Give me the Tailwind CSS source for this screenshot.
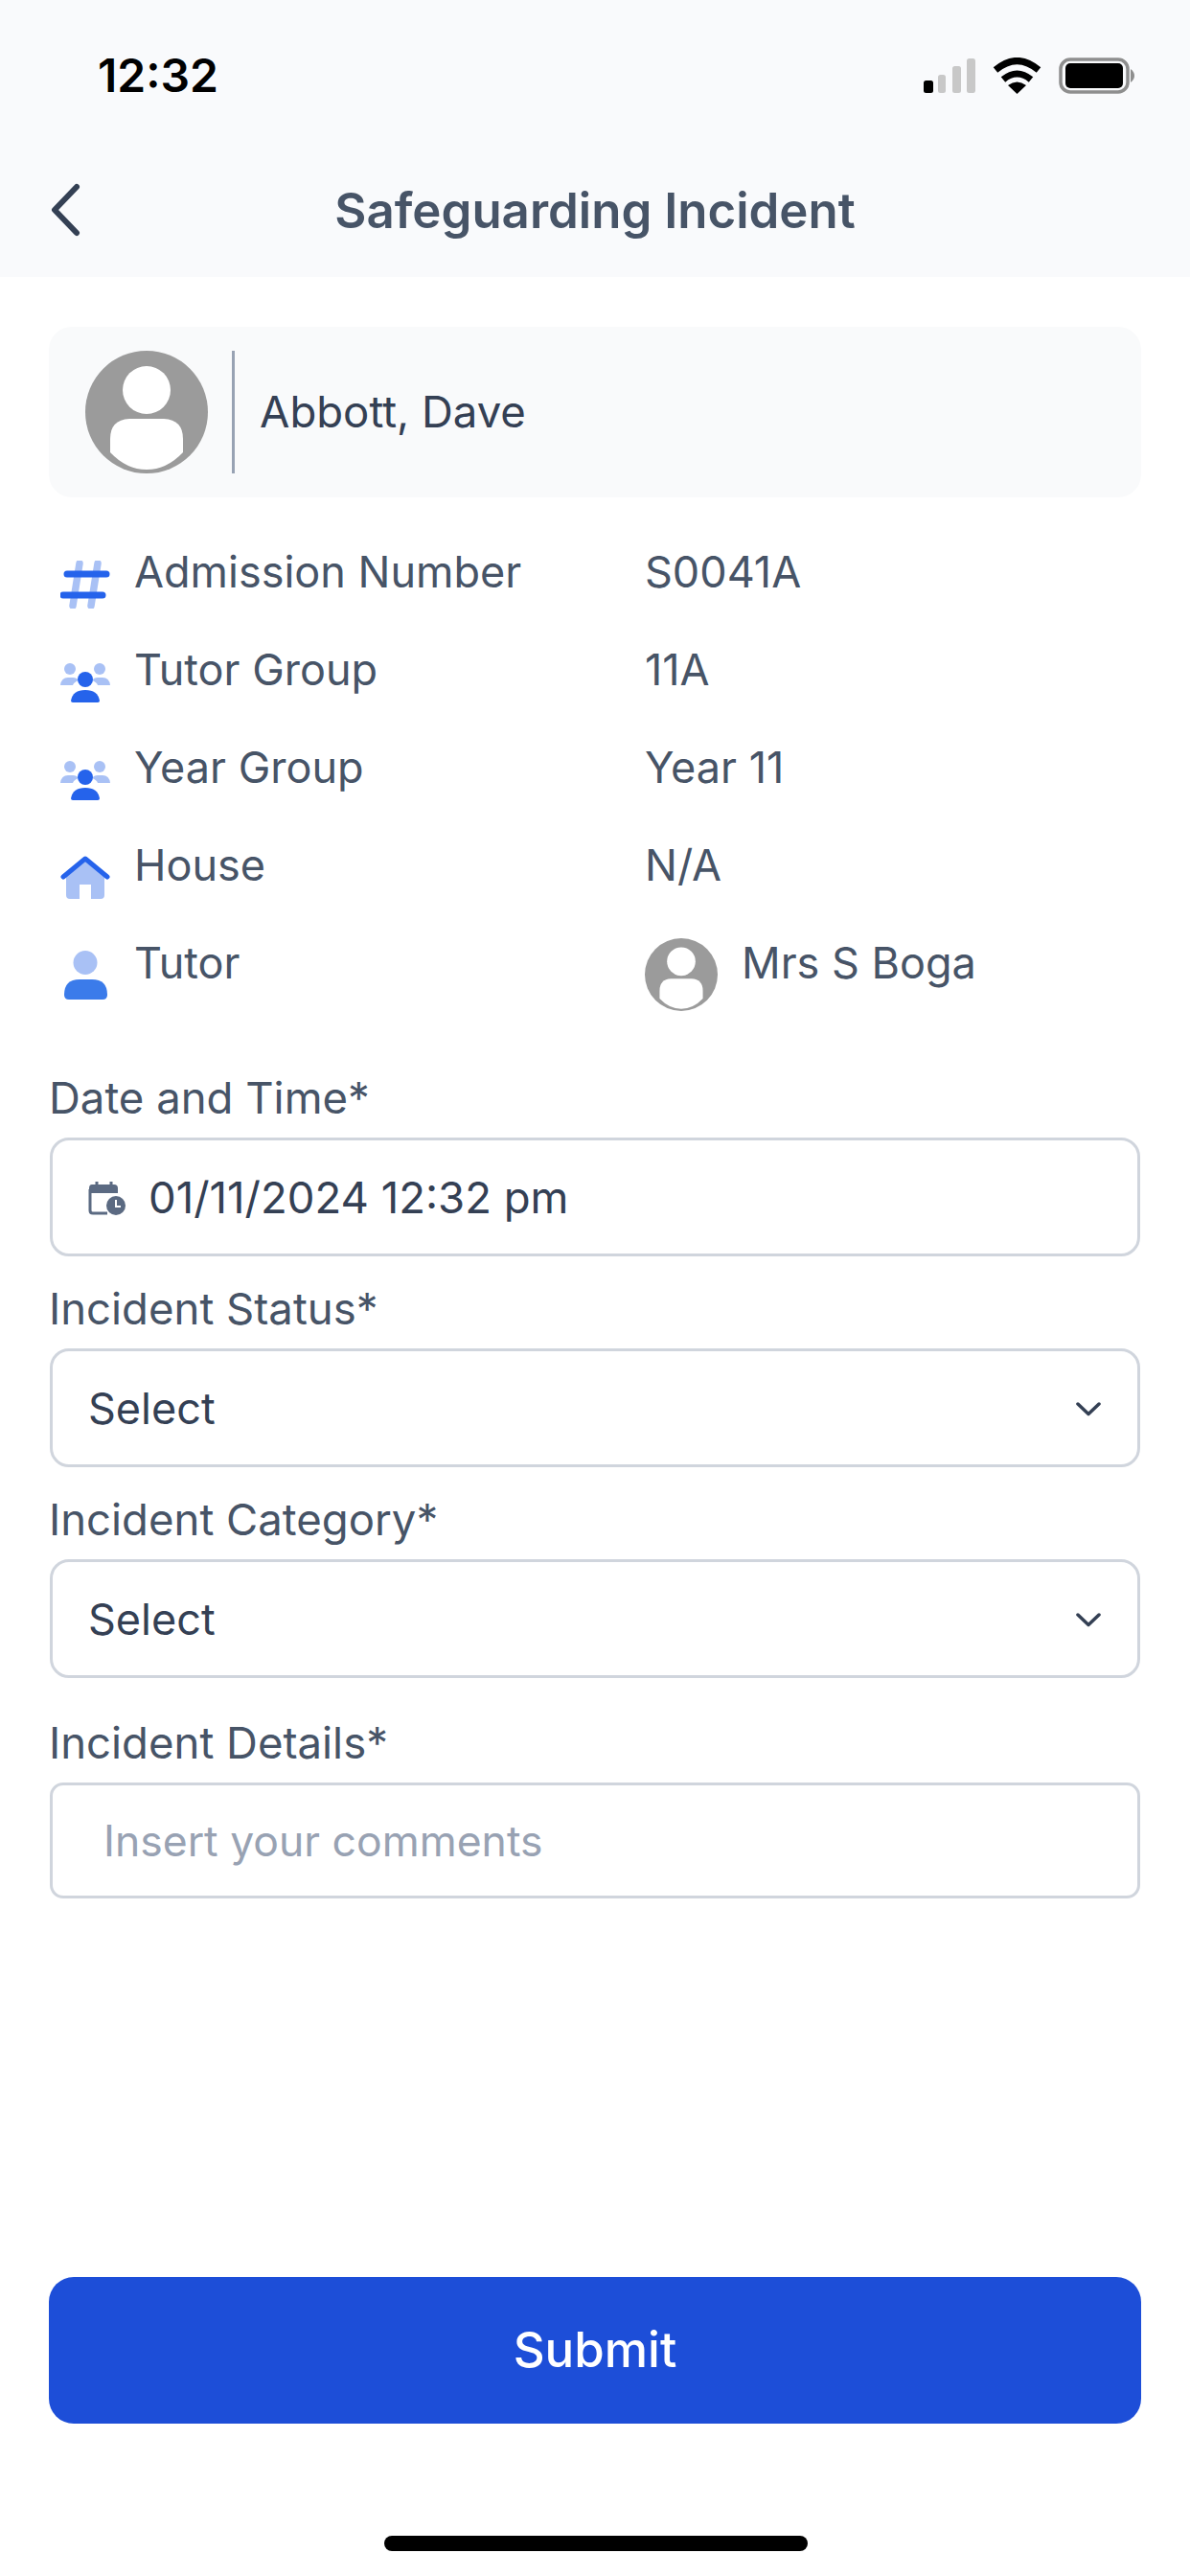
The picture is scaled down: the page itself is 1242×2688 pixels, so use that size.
<!DOCTYPE html>
<html lang="en">
<head>
    <meta charset="UTF-8">
    <title>Safeguarding Incident</title>
    <script src="https://cdn.jsdelivr.net/npm/@tailwindcss/browser@4"></script>
</head>
<body class="bg-white font-['Inter',sans-serif] text-[#475467]">
<div class="w-[1242px] h-[2688px] flex flex-col">
    <!-- header -->
    <div class="h-[289px] bg-[#f9fafc] flex flex-col shrink-0">
        <div class="h-[158px] pl-[102px] pr-[58px] flex items-center justify-between">
            <span class="text-[48px] font-semibold text-black leading-none">12:32</span>
            <div class="flex items-center gap-[18px]">
                <svg width="54" height="38" viewBox="0 0 54 38">
                    <rect x="0" y="24" width="10" height="13" rx="2.5" fill="#000"/>
                    <rect x="15" y="18" width="8" height="19" rx="2.5" fill="#c8c8c8"/>
                    <rect x="30" y="9" width="9" height="28" rx="2.5" fill="#c8c8c8"/>
                    <rect x="45" y="1" width="9" height="36" rx="2.5" fill="#c8c8c8"/>
                </svg>
                <svg width="51" height="38" viewBox="0 0 51 38">
                    <path d="M3 13 Q25.500 -6 48 13" fill="none" stroke="#000" stroke-width="7"/>
                    <path d="M11 23 Q25.500 11 40 23" fill="none" stroke="#000" stroke-width="7"/>
                    <path d="M25.500 38 L16 29 Q25.500 22 35 29 Z" fill="#000"/>
                </svg>
                <svg width="79" height="38" viewBox="0 0 79 38">
                    <rect x="2" y="2" width="70" height="34" rx="10" fill="none" stroke="#8e8e8e" stroke-width="3.500"/>
                    <rect x="7" y="6" width="60" height="26" rx="5" fill="#000"/>
                    <path d="M75 12 Q79 15 79 19 Q79 23 75 26 Z" fill="#8e8e8e"/>
                </svg>
            </div>
        </div>
        <div class="relative h-[122px] flex items-center justify-center">
            <svg class="absolute left-[50px] top-[33px]" width="36" height="56" viewBox="0 0 36 56" fill="none">
                <path d="M30 4 L7 28 L30 52" stroke="#344054" stroke-width="6" stroke-linecap="round" stroke-linejoin="round"/>
            </svg>
            <h1 class="text-[51px] font-semibold text-[#475467] pt-[2px]">Safeguarding Incident</h1>
        </div>
    </div>

    <div class="px-[51px] flex flex-col grow">
        <!-- student card -->
        <div class="mt-[52px] h-[178px] bg-[#f9fafb] rounded-[24px] pl-[38px] flex items-center">
            <svg width="128" height="128" viewBox="0 0 128 128">
                <circle cx="64" cy="64" r="64" fill="#9b9b9b"/>
                <circle cx="64" cy="41" r="25" fill="#fff"/>
                <path d="M26 92 Q26 72 46 71 H82 Q102 72 102 92 V106 Q85 124 64 124 Q43 124 26 106 Z" fill="#fff"/>
            </svg>
            <div class="w-[3px] h-[128px] bg-[#98a2b3] ml-[25px]"></div>
            <span class="ml-[26px] text-[45.500px] text-[#344054]">Abbott, Dave</span>
        </div>

        <!-- details -->
        <div class="mt-[46px] grid grid-cols-[622px_1fr] auto-rows-[102px] text-[45px] text-[#475467]">
            <div class="flex items-center h-[64px]">
                <div class="w-[89px] shrink-0 mt-[25px] pl-[12px]">
                    <svg class="block" width="52" height="50" viewBox="0 0 52 50">
                        <path d="M20 3 L13 47 M39 3 L32 47" stroke="#a9c1f5" stroke-width="7.500" stroke-linecap="round"/>
                        <path d="M7 14 H48 M3 36 H44" stroke="#2563eb" stroke-width="7" stroke-linecap="round"/>
                    </svg>
                </div>
                <span>Admission Number</span>
            </div>
            <div class="h-[64px] flex items-center">S0041A</div>

            <div class="flex items-center h-[64px]">
                <div class="w-[89px] shrink-0 mt-[27px] pl-[12px]">
                    <svg class="block" width="52" height="41" viewBox="0 0 52 41">
                        <circle cx="10" cy="6" r="6" fill="#a9c1f5"/><circle cx="41" cy="6" r="6" fill="#a9c1f5"/>
                        <path d="M0 23 Q1 15 8 15 H13 Q17 15 19 18 Q14 20 13 23 Z M52 23 Q51 15 44 15 H39 Q35 15 33 18 Q38 20 39 23 Z" fill="#a9c1f5"/>
                        <circle cx="26" cy="17" r="8" fill="#2563eb"/>
                        <path d="M11 39 Q13 28 26 28 Q39 28 41 39 Q41 41 39 41 H13 Q11 41 11 39 Z" fill="#2563eb"/>
                    </svg>
                </div>
                <span>Tutor Group</span>
            </div>
            <div class="h-[64px] flex items-center">11A</div>

            <div class="flex items-center h-[64px]">
                <div class="w-[89px] shrink-0 mt-[27px] pl-[12px]">
                    <svg class="block" width="52" height="41" viewBox="0 0 52 41">
                        <circle cx="10" cy="6" r="6" fill="#a9c1f5"/><circle cx="41" cy="6" r="6" fill="#a9c1f5"/>
                        <path d="M0 23 Q1 15 8 15 H13 Q17 15 19 18 Q14 20 13 23 Z M52 23 Q51 15 44 15 H39 Q35 15 33 18 Q38 20 39 23 Z" fill="#a9c1f5"/>
                        <circle cx="26" cy="17" r="8" fill="#2563eb"/>
                        <path d="M11 39 Q13 28 26 28 Q39 28 41 39 Q41 41 39 41 H13 Q11 41 11 39 Z" fill="#2563eb"/>
                    </svg>
                </div>
                <span>Year Group</span>
            </div>
            <div class="h-[64px] flex items-center">Year 11</div>

            <div class="flex items-center h-[64px]">
                <div class="w-[89px] shrink-0 mt-[25px] pl-[12px]">
                    <svg class="block" width="52" height="45" viewBox="0 0 52 45">
                        <path d="M6 22 L26 6 L46 22 V41 Q46 45 42 45 H32 V30 H20 V45 H10 Q6 45 6 41 Z" fill="#a9c1f5"/>
                        <path d="M3 22 L26 3 L49 22" fill="none" stroke="#2563eb" stroke-width="5" stroke-linecap="round" stroke-linejoin="round"/>
                    </svg>
                </div>
                <span>House</span>
            </div>
            <div class="h-[64px] flex items-center">N/A</div>

            <div class="flex items-center h-[64px]">
                <div class="w-[89px] shrink-0 mt-[25px] pl-[16px]">
                    <svg class="block" width="45" height="51" viewBox="0 0 45 51">
                        <circle cx="22" cy="12.500" r="12.500" fill="#a9c1f5"/>
                        <path d="M0 46 Q0 30 16 30 H29 Q45 30 45 46 Q45 51 40 51 H5 Q0 51 0 46 Z" fill="#3b7bea"/>
                    </svg>
                </div>
                <span>Tutor</span>
            </div>
            <div class="h-[64px] flex items-center gap-[25px]">
                <svg class="mt-[23px]" width="76" height="76" viewBox="0 0 128 128">
                    <circle cx="64" cy="64" r="64" fill="#9b9b9b"/>
                    <circle cx="64" cy="41" r="25" fill="#fff"/>
                    <path d="M26 92 Q26 72 46 71 H82 Q102 72 102 92 V106 Q85 124 64 124 Q43 124 26 106 Z" fill="#fff"/>
                </svg>
                <span>Mrs S Boga</span>
            </div>
        </div>

        <!-- form -->
        <label class="mt-[39px] text-[45.500px] leading-[64px] text-[#475467]">Date and Time*</label>
        <div class="mt-[9px] mx-[1px] h-[124px] border-[3px] border-[#d0d5dd] rounded-[20px] pl-[37px] pt-[2px] flex items-center gap-[24px] text-[#344054] text-[45.500px]">
            <svg width="39" height="35" viewBox="0 0 39 35">
                <path d="M9 0 V6 M24 0 V6" stroke="#5b6a82" stroke-width="3"/>
                <path d="M4 3 H27 Q31 3 31 7 V12 H1 V7 Q1 3 4 3 Z" fill="#5b6a82"/>
                <path d="M2 8 V30 Q2 33 5 33 H20" fill="none" stroke="#5b6a82" stroke-width="3"/>
                <circle cx="29" cy="25" r="10" fill="#5b6a82"/>
                <path d="M29 19 V26 H34" fill="none" stroke="#fff" stroke-width="2"/>
            </svg>
            <span>01/11/2024 12:32 pm</span>
        </div>

        <label class="mt-[23px] text-[45.500px] leading-[64px] text-[#475467]">Incident Status*</label>
        <div class="mt-[9px] mx-[1px] h-[124px] border-[3px] border-[#d0d5dd] rounded-[20px] pl-[37px] pr-[38px] pt-[2px] flex items-center justify-between text-[#344054] text-[45px]">
            <span>Select</span>
            <svg width="26" height="15" viewBox="0 0 26 15" fill="none"><path d="M2 2 L13 12.500 L24 2" stroke="#344054" stroke-width="3.500" stroke-linecap="round" stroke-linejoin="round"/></svg>
        </div>

        <label class="mt-[23px] text-[45.500px] leading-[64px] text-[#475467]">Incident Category*</label>
        <div class="mt-[9px] mx-[1px] h-[124px] border-[3px] border-[#d0d5dd] rounded-[20px] pl-[37px] pr-[38px] pt-[2px] flex items-center justify-between text-[#344054] text-[45px]">
            <span>Select</span>
            <svg width="26" height="15" viewBox="0 0 26 15" fill="none"><path d="M2 2 L13 12.500 L24 2" stroke="#344054" stroke-width="3.500" stroke-linecap="round" stroke-linejoin="round"/></svg>
        </div>

        <label class="mt-[36px] text-[45.500px] leading-[64px] text-[#475467]">Incident Details*</label>
        <div class="mt-[9px] mx-[1px] h-[121px] border-[3px] border-[#d0d5dd] rounded-[14px] pl-[53px] pt-[2px] flex items-center text-[#98a2b3] text-[44.500px]">Insert your comments</div>

        <button class="mt-auto mb-[159px] h-[153px] bg-[#1d4ed8] rounded-[26px] text-white text-[51px] font-medium">Submit</button>
    </div>

    <!-- home indicator -->
    <div class="relative">
        <div class="absolute left-[401px] bottom-[26px] w-[442px] h-[16px] rounded-full bg-black"></div>
    </div>
</div>
</body>
</html>
